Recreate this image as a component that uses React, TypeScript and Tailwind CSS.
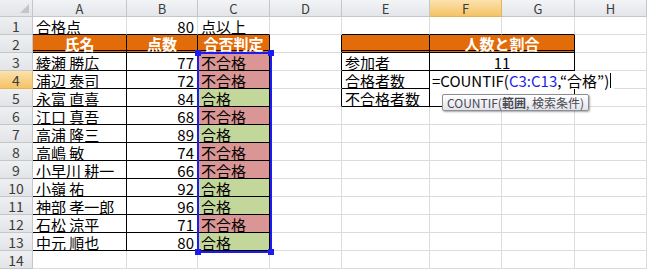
import type { ReactNode } from 'react';

const font = { fontFamily: '"Noto Sans CJK JP", "Noto Sans", sans-serif' };

const COLS = ['A', 'B', 'C', 'D', 'E', 'F', 'G', 'H'];

const people = [
  { name: '綾瀬 勝広', score: 77, pass: false },
  { name: '浦辺 泰司', score: 72, pass: false },
  { name: '永富 直喜', score: 84, pass: true },
  { name: '江口 真吾', score: 68, pass: false },
  { name: '高浦 隆三', score: 89, pass: true },
  { name: '高嶋 敏', score: 74, pass: false },
  { name: '小早川 耕一', score: 66, pass: false },
  { name: '小嶺 祐', score: 92, pass: true },
  { name: '神部 孝一郎', score: 96, pass: true },
  { name: '石松 涼平', score: 71, pass: false },
  { name: '中元 順也', score: 80, pass: true },
];

const grid = 'border-r border-b border-[#dadcdd]';
const boxed = 'border-r border-b border-black';
const orange =
  'border-r border-black border-b-[3px] border-double bg-[#e36c0a] text-white font-bold justify-center';

const Cell = ({
  children,
  className = grid,
  span,
}: {
  children?: ReactNode;
  className?: string;
  span?: boolean;
}) => (
  <div
    className={`h-[18px] flex items-center px-[3px] pt-px whitespace-nowrap text-[15px] leading-[15px] text-black ${span ? 'col-span-2' : ''} ${className}`}
  >
    {children}
  </div>
);

const RowHead = ({ n }: { n: number }) => (
  <div
    className={`h-[18px] flex items-center justify-center text-[14px] leading-none text-[#3c3c3c] border-r border-b ${
      n === 4
        ? 'bg-gradient-to-b from-[#fbe2ad] to-[#f4c364] border-[#e3b25a]'
        : 'bg-gradient-to-b from-[#eff0f2] to-[#e2e4e8] border-[#c3c6cb]'
    }`}
  >
    {n}
  </div>
);

const App = () => {
  return (
    <div className="w-[647px] h-[271px] overflow-hidden bg-white" style={font}>
      <div className="relative grid grid-cols-[33px_94px_71px_72px_72px_88px_72px_73px_72px]">
        {/* column headers */}
        <div className="h-[17px] bg-gradient-to-b from-[#eff0f2] to-[#e2e4e8] border-r border-b border-[#c3c6cb] flex items-end justify-end pr-[3px] pb-[3px]">
          <svg width="9" height="9" viewBox="0 0 9 9">
            <path d="M9 0 L9 9 L0 9 Z" fill="#c2c5ca" />
          </svg>
        </div>
        {COLS.map((c) => (
          <div
            key={c}
            className={`h-[17px] flex items-center justify-center text-[13px] leading-none text-[#3c3c3c] border-r border-b ${
              c === 'F'
                ? 'bg-gradient-to-b from-[#fbe2ad] to-[#f4c364] border-[#e3b25a]'
                : 'bg-gradient-to-b from-[#f3f4f6] to-[#e3e5e9] border-[#c3c6cb]'
            }`}
          >
            {c}
          </div>
        ))}

        {/* row 1 */}
        <RowHead n={1} />
        <Cell className="border-r border-b border-[#dadcdd] border-b-black">合格点</Cell>
        <Cell className="border-r border-b border-[#dadcdd] border-b-black justify-end">80</Cell>
        <Cell className="border-r border-b border-[#dadcdd] border-b-black">点以上</Cell>
        <Cell />
        <Cell className="border-r border-b border-[#dadcdd] border-b-black" />
        <Cell className="border-r border-b border-[#dadcdd] border-b-black" />
        <Cell className="border-r border-b border-[#dadcdd] border-b-black" />
        <Cell />

        {/* row 2 */}
        <RowHead n={2} />
        <Cell className={orange}>氏名</Cell>
        <Cell className={orange}>点数</Cell>
        <Cell className={orange}>合否判定</Cell>
        <Cell className="border-r border-b border-[#dadcdd] border-r-black" />
        <Cell className={orange} />
        <Cell className={orange} span>
          人数と割合
        </Cell>
        <Cell />

        {people.map((p, i) => {
          const row = i + 3;
          return (
            <div key={row} className="contents">
              <RowHead n={row} />
              <Cell className={boxed}>{p.name}</Cell>
              <Cell className={`${boxed} justify-end`}>{p.score}</Cell>
              <Cell className={`${boxed} ${p.pass ? 'bg-[#c4d79b]' : 'bg-[#da9694]'}`}>
                {p.pass ? '合格' : '不合格'}
              </Cell>
              <Cell
                className={
                  row <= 5 ? 'border-r border-b border-[#dadcdd] border-r-black' : grid
                }
              />
              {row === 3 && (
                <>
                  <Cell className={boxed}>参加者</Cell>
                  <Cell className={`${boxed} justify-center`} span>
                    11
                  </Cell>
                </>
              )}
              {row === 4 && (
                <>
                  <Cell className={boxed}>合格者数</Cell>
                  <div className="relative col-span-2 h-[18px] border-r border-b border-black">
                    <div className="absolute left-0 top-0 h-[18px] z-10 bg-white flex items-center pl-[2px] pr-[3px] pt-px whitespace-nowrap text-[15px] leading-[15px] text-black">
                      =COUNTIF(<span className="text-[#1c1cf0]">C3:C13</span>,“合格”)
                      <span className="ml-[1px] inline-block w-px h-[15px] bg-black" />
                    </div>
                  </div>
                </>
              )}
              {row === 5 && (
                <>
                  <Cell className={boxed}>不合格者数</Cell>
                  <Cell className={boxed} span />
                </>
              )}
              {row > 5 && (
                <>
                  <Cell />
                  <Cell />
                  <Cell />
                </>
              )}
              <Cell />
            </div>
          );
        })}

        {/* row 14 */}
        <RowHead n={14} />
        {COLS.map((c) => (
          <Cell key={c} />
        ))}

        {/* formula reference highlight C3:C13 */}
        <div className="absolute left-[197px] top-[52px] w-[75px] h-[201px] border-2 border-[#1c1cf0] pointer-events-none">
          <span className="absolute -left-[4px] -top-[4px] w-[6px] h-[6px] bg-[#1c1cf0]" />
          <span className="absolute -right-[4px] -top-[4px] w-[6px] h-[6px] bg-[#1c1cf0]" />
          <span className="absolute -left-[4px] -bottom-[4px] w-[6px] h-[6px] bg-[#1c1cf0]" />
          <span className="absolute -right-[4px] -bottom-[4px] w-[6px] h-[6px] bg-[#1c1cf0]" />
        </div>

        {/* function tooltip */}
        <div className="absolute left-[442px] top-[94px] z-20 h-[17px] px-[4px] flex items-center rounded-[2px] border border-[#8d8d94] bg-gradient-to-b from-white to-[#e3e4ec] shadow-[1px_1px_2px_rgba(0,0,0,0.35)] text-[12px] leading-[12px] text-[#4a4a52] whitespace-nowrap">
          COUNTIF(<span className="font-bold">範囲</span>, 検索条件)
        </div>
      </div>
    </div>
  );
};

export default App;
